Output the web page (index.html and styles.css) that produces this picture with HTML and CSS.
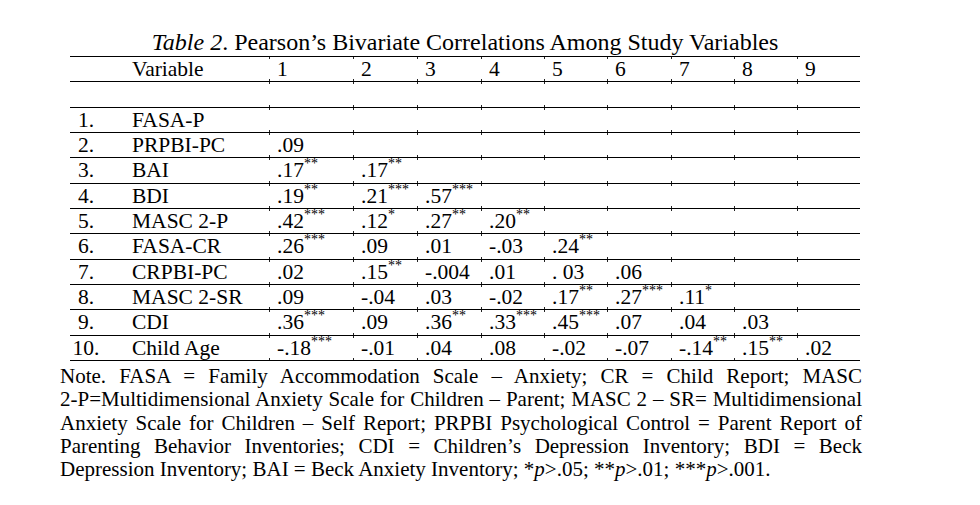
FILE: index.html
```html
<!DOCTYPE html>
<html>
<head>
<meta charset="utf-8">
<link rel="stylesheet" href="styles.css">
</head>
<body>
<div class="page">
  <h1 class="title"><i>Table 2</i>. Pearson’s Bivariate Correlations Among Study Variables</h1>
  <table class="corr">
    <colgroup>
      <col class="w-n"><col class="w-v"><col class="w-1"><col class="w-2"><col class="w-3"><col class="w-4"><col class="w-5"><col class="w-6"><col class="w-7"><col class="w-8"><col class="w-9">
    </colgroup>
    <tr><td class="n"></td><td class="v">Variable</td><td class="c">1</td><td class="c">2</td><td class="c">3</td><td class="c">4</td><td class="c">5</td><td class="c">6</td><td class="c">7</td><td class="c">8</td><td class="c">9</td></tr>
    <tr><td class="n">&nbsp;</td><td class="v"></td><td class="c"></td><td class="c"></td><td class="c"></td><td class="c"></td><td class="c"></td><td class="c"></td><td class="c"></td><td class="c"></td><td class="c"></td></tr>
    <tr><td class="n">1.</td><td class="v">FASA-P</td><td class="c"></td><td class="c"></td><td class="c"></td><td class="c"></td><td class="c"></td><td class="c"></td><td class="c"></td><td class="c"></td><td class="c"></td></tr>
    <tr><td class="n">2.</td><td class="v">PRPBI-PC</td><td class="c">.09</td><td class="c"></td><td class="c"></td><td class="c"></td><td class="c"></td><td class="c"></td><td class="c"></td><td class="c"></td><td class="c"></td></tr>
    <tr><td class="n">3.</td><td class="v">BAI</td><td class="c">.17<sup>**</sup></td><td class="c">.17<sup>**</sup></td><td class="c"></td><td class="c"></td><td class="c"></td><td class="c"></td><td class="c"></td><td class="c"></td><td class="c"></td></tr>
    <tr><td class="n">4.</td><td class="v">BDI</td><td class="c">.19<sup>**</sup></td><td class="c">.21<sup>***</sup></td><td class="c">.57<sup>***</sup></td><td class="c"></td><td class="c"></td><td class="c"></td><td class="c"></td><td class="c"></td><td class="c"></td></tr>
    <tr><td class="n">5.</td><td class="v">MASC 2-P</td><td class="c">.42<sup>***</sup></td><td class="c">.12<sup>*</sup></td><td class="c">.27<sup>**</sup></td><td class="c">.20<sup>**</sup></td><td class="c"></td><td class="c"></td><td class="c"></td><td class="c"></td><td class="c"></td></tr>
    <tr><td class="n">6.</td><td class="v">FASA-CR</td><td class="c">.26<sup>***</sup></td><td class="c">.09</td><td class="c">.01</td><td class="c">-.03</td><td class="c">.24<sup>**</sup></td><td class="c"></td><td class="c"></td><td class="c"></td><td class="c"></td></tr>
    <tr><td class="n">7.</td><td class="v">CRPBI-PC</td><td class="c">.02</td><td class="c">.15<sup>**</sup></td><td class="c">-.004</td><td class="c">.01</td><td class="c">. 03</td><td class="c">.06</td><td class="c"></td><td class="c"></td><td class="c"></td></tr>
    <tr><td class="n">8.</td><td class="v">MASC 2-SR</td><td class="c">.09</td><td class="c">-.04</td><td class="c">.03</td><td class="c">-.02</td><td class="c">.17<sup>**</sup></td><td class="c">.27<sup>***</sup></td><td class="c">.11<sup>*</sup></td><td class="c"></td><td class="c"></td></tr>
    <tr><td class="n">9.</td><td class="v">CDI</td><td class="c">.36<sup>***</sup></td><td class="c">.09</td><td class="c">.36<sup>**</sup></td><td class="c">.33<sup>***</sup></td><td class="c">.45<sup>***</sup></td><td class="c">.07</td><td class="c">.04</td><td class="c">.03</td><td class="c"></td></tr>
    <tr><td class="n">10.</td><td class="v">Child Age</td><td class="c">-.18<sup>***</sup></td><td class="c">-.01</td><td class="c">.04</td><td class="c">.08</td><td class="c">-.02</td><td class="c">-.07</td><td class="c">-.14<sup>**</sup></td><td class="c">.15<sup>**</sup></td><td class="c">.02</td></tr>
  </table>
  <p class="note">
    <span class="ln">Note. FASA = Family Accommodation Scale – Anxiety; CR = Child Report; MASC</span>
    <span class="ln">2-P=Multidimensional Anxiety Scale for Children – Parent; MASC 2 – SR= Multidimensional</span>
    <span class="ln">Anxiety Scale for Children – Self Report; PRPBI Psychological Control = Parent Report of</span>
    <span class="ln">Parenting Behavior Inventories; CDI = Children’s Depression Inventory; BDI = Beck</span>
    <span class="ln last">Depression Inventory; BAI = Beck Anxiety Inventory; *<i>p</i>&gt;.05; **<i>p</i>&gt;.01; ***<i>p</i>&gt;.001.</span>
  </p>
</div>
</body>
</html>
```
FILE: styles.css
```css
html, body {
  margin: 0;
  background: #fff;
}

body {
  color: #000;
  font-family: "Liberation Serif", "Times New Roman", serif;
  font-size: 21.5px;
}

.page {
  width: 790px;
  padding: 29px 0 0 70px;
}

.title {
  margin: 0;
  font-size: 24px;
  font-weight: normal;
  line-height: 27px;
  text-align: center;
  white-space: nowrap;
}

.corr {
  width: 790px;
  border-collapse: collapse;
  table-layout: fixed;
}

.w-n { width: 32px; }
.w-v { width: 167px; }
.w-1 { width: 84px; }
.w-2, .w-3, .w-6 { width: 64px; }
.w-4, .w-5, .w-7, .w-8, .w-9 { width: 63px; }

.corr td {
  padding: 0;
  line-height: 24.33px;
  border-bottom: 1px solid #000;
  white-space: nowrap;
  vertical-align: top;
}

.corr tr:first-child td {
  border-top: 1px solid #000;
}

.corr .n {
  text-align: center;
}

.corr .v {
  padding-left: 30px;
}

.corr .c {
  padding-left: 8px;
  background:
    linear-gradient(#222, #222) left top / 1px 2px no-repeat,
    linear-gradient(#222, #222) left bottom / 1px 2px no-repeat;
}

.corr sup {
  font-size: 14px;
  line-height: 0;
  vertical-align: 9px;
}

.note {
  width: 802px;
  margin: 4px 0 0 -10px;
  font-size: 21px;
  line-height: 23.3px;
}

.note .ln {
  display: block;
  text-align: justify;
  text-align-last: justify;
  white-space: nowrap;
}

.note .ln.last {
  text-align-last: left;
}
```
